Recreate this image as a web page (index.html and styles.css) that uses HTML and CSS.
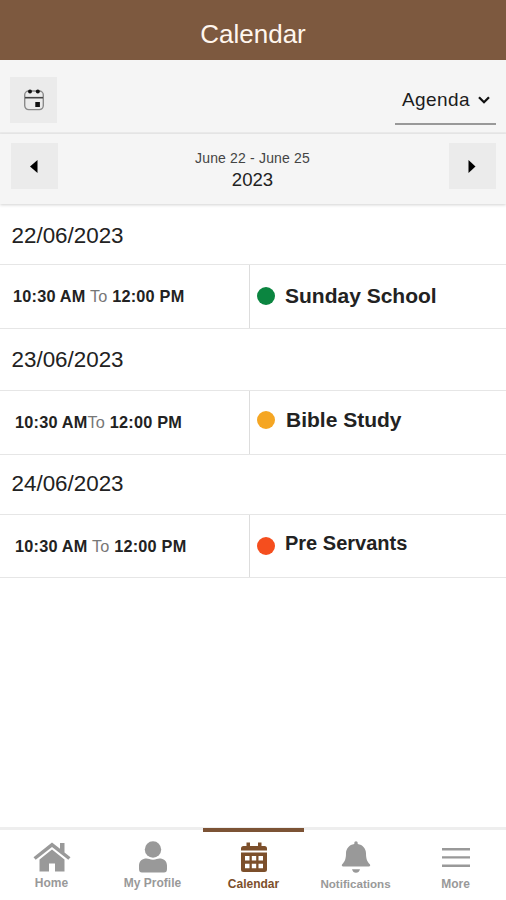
FILE: index.html
```html
<!DOCTYPE html>
<html lang="en">
<head>
<meta charset="utf-8">
<title>Calendar</title>
<link rel="stylesheet" href="styles.css">
</head>
<body>
<div class="app">
  <header class="header">Calendar</header>
  <div class="toolbar">
    <button class="square" aria-label="Pick date">
      <svg width="22" height="24" viewBox="0 0 22 24" fill="none">
        <rect x="1.700" y="3" width="18.600" height="18.600" rx="4" stroke="#8a8a8a" stroke-width="1.400"/>
        <path d="M2 9.700h18" stroke="#444" stroke-width="1.600"/>
        <circle cx="7" cy="3.600" r="2" fill="#111"/><circle cx="14.800" cy="3.600" r="2" fill="#111"/>
        <rect x="12.300" y="14" width="4.600" height="5" fill="#111"/>
      </svg>
    </button>
    <div class="select">Agenda
      <svg width="12" height="8" viewBox="0 0 12 8"><path d="M1 1.200l5 5 5-5" fill="none" stroke="#111" stroke-width="2.300"/></svg>
    </div>
  </div>
  <div class="range">
    <button class="square prev" aria-label="Previous"><svg width="8" height="13" viewBox="0 0 8 13"><path d="M7.500 0v13L0 6.500z" fill="#000"/></svg></button>
    <div class="range-text"><span class="days">June 22 - June 25</span><span class="year">2023</span></div>
    <button class="square" aria-label="Next"><svg width="8" height="13" viewBox="0 0 8 13"><path d="M.500 0v13L7.500 6.500z" fill="#000"/></svg></button>
  </div>
  <main class="agenda">
    <h2 class="date first">22/06/2023</h2>
    <div class="event">
      <div class="time"><b>10:30 AM</b> To <b>12:00 PM</b></div>
      <div class="name"><i class="dot green"></i><span>Sunday School</span></div>
    </div>
    <h2 class="date">23/06/2023</h2>
    <div class="event second">
      <div class="time"><b>10:30 AM</b>To <b>12:00 PM</b></div>
      <div class="name"><i class="dot amber"></i><span>Bible Study</span></div>
    </div>
    <h2 class="date third">24/06/2023</h2>
    <div class="event last">
      <div class="time"><b>10:30 AM</b> To <b>12:00 PM</b></div>
      <div class="name"><i class="dot red"></i><span>Pre Servants</span></div>
    </div>
  </main>
  <nav class="nav">
    <a class="tab">
      <svg width="38" height="32" viewBox="0 0 38 32" fill="#999"><path d="M19 1.500L.5 16.200 2.700 18.800 19 6 35.300 18.800 37.500 16.200 31.500 11.400V2h-4.500v5.800z"/><path d="M19 8.500L6.500 18.500V30.500h9.500V22.500h6v8h9.500V18.500z"/></svg>
      <span>Home</span>
    </a>
    <a class="tab">
      <svg width="30" height="32" viewBox="0 0 30 32" fill="#999"><circle cx="15" cy="8.500" r="8.200"/><path d="M1 28v-3.500C1 20 4.500 17.500 8.500 17.500c2 0 3.500 1.200 6.500 1.200s4.500-1.200 6.500-1.200c4 0 7.500 2.500 7.500 7V28q0 3.500-3 3.500H4q-3 0-3-3.500z"/></svg>
      <span>My Profile</span>
    </a>
    <a class="tab active">
      <svg width="28" height="32" viewBox="0 0 28 32" fill="#7c4f2b"><path d="M1 9.500V7.500q0-2.500 2.500-2.500H6.500V1.500h3.500V5h8V1.500h3.500V5h3Q27 5 27 7.500v2z"/><path fill-rule="evenodd" d="M1 11.500h26v17q0 2.500-2.500 2.500h-21Q1 31 1 28.500zm4 3.500v4.500h4.500v-4.500zm6.800 0v4.500h4.400v-4.500zm6.700 0v4.500H23v-4.500zM5 22.700v4.500h4.500v-4.500zm6.800 0v4.500h4.400v-4.500zm6.700 0v4.500H23v-4.500z"/></svg>
      <span>Calendar</span>
    </a>
    <a class="tab notifications">
      <svg width="30" height="32" viewBox="0 0 30 32" fill="#999"><path d="M13.300 3V1.700q0-1.500 1.700-1.500t1.700 1.500V3c5 .8 8.300 4.500 8.300 9.300 0 5.500 1 8 3.800 11 .8 1 .4 2.200-1 2.200H2.200c-1.400 0-1.800-1.200-1-2.200C4 20.300 5 17.800 5 12.300 5 7.500 8.300 3.800 13.300 3zM11 28.200h8q-1 3.500-4 3.500T11 28.200z"/></svg>
      <span>Notifications</span>
    </a>
    <a class="tab more">
      <svg width="28" height="32" viewBox="0 0 28 32" fill="#999"><path d="M0 7h28v2.400H0zM0 15.200h28v2.400H0zM0 23.500h28v2.400H0z"/></svg>
      <span>More</span>
    </a>
  </nav>
</div>
</body>
</html>
```
FILE: styles.css
```css
* { box-sizing: border-box; }
body { margin: 0; font-family: "Liberation Sans", Arial, sans-serif; color: #222; background: #fff; }
svg { display: block; }
.app { width: 506px; height: 900px; display: flex; flex-direction: column; overflow: hidden; }
.header { height: 60px; flex: none; padding-top: 9px; background: #7d593f; color: #fff6ee; font-size: 26px; line-height: 50px; text-align: center; }
.toolbar { height: 74px; flex: none; display: flex; justify-content: space-between; align-items: flex-start; padding: 17px 10px 0; background: #f5f5f5; border-bottom: 2px solid #ebebeb; }
.square { width: 47px; height: 46px; border: 0; padding: 0; background: #ebebeb; display: flex; align-items: center; justify-content: center; }
.prev { padding-right: 2px; }
.select { width: 101px; height: 48px; display: flex; align-items: center; justify-content: space-between; padding: 0 6px 1px 7px; border-bottom: 2px solid #999; font-size: 19px; letter-spacing: .4px; color: #1c1c1c; }
.range { height: 70px; flex: none; display: flex; justify-content: space-between; align-items: flex-start; padding: 9px 10px 0 11px; background: #f5f5f5; box-shadow: 0 1px 3px rgba(0,0,0,.18); }
.range-text { display: flex; flex-direction: column; align-items: center; padding-top: 6px; margin-left: -2px; }
.days { font-size: 14px; line-height: 18px; letter-spacing: .17px; color: #444; }
.year { font-size: 18.6px; line-height: 26px; }
.agenda { flex: 1; }
.date { margin: 0; height: 61px; padding-left: 11.5px; font-size: 22.4px; font-weight: 400; line-height: 62px; }
.date.first { height: 60px; line-height: 63px; }
.date.third { height: 59px; line-height: 57px; }
.event { height: 65px; display: grid; grid-template-columns: 250px 1fr; border: solid #e6e6e6; border-width: 1px 0; }
.time { border-right: 1px solid #ddd; padding-left: 13px; font-size: 16.3px; letter-spacing: .2px; line-height: 62px; color: #777; white-space: nowrap; }
.time b { color: #222; }
.name { display: flex; align-items: center; gap: 10px; padding: 0 0 2px 7px; font-size: 21px; font-weight: 700; }
.dot { width: 18px; height: 18px; border-radius: 50%; flex: none; }
.green { background: #0b8540; }
.amber { background: #f5a623; }
.red { background: #f54e1e; }
.second .time, .last .time { padding-left: 15px; }
.second .name { gap: 11px; padding-bottom: 5px; }
.last { height: 64px; }
.last .name { font-size: 20px; padding-bottom: 1px; }
.last .name span { padding-bottom: 4px; }
.nav { height: 73px; flex: none; display: grid; grid-template-columns: repeat(5, 1fr); border-top: 3px solid #eee; padding-left: 1px; }
.tab { display: flex; flex-direction: column; align-items: center; gap: 2px; padding-top: 11px; color: #999; font-size: 12px; line-height: 16px; font-weight: 700; white-space: nowrap; }
.active { margin-top: -2px; padding-top: 9px; border-top: 4px solid #7c5335; color: #7c4f2b; gap: 3px; }
.notifications { font-size: 11.6px; padding-left: 2px; gap: 3px; }
.more { gap: 3px; }
```
